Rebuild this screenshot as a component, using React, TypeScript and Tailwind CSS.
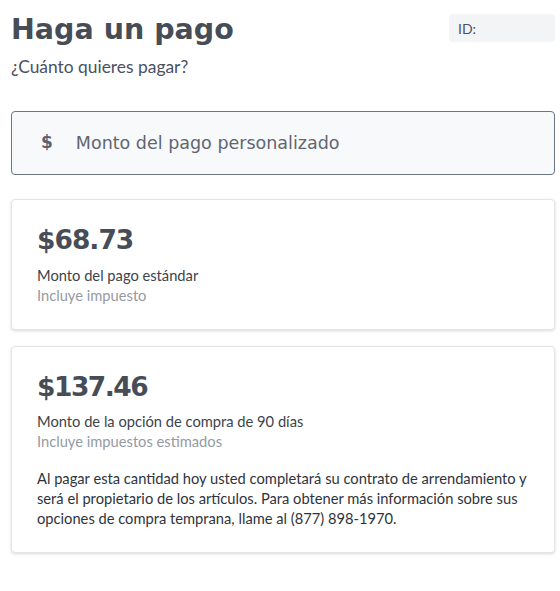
import React from 'react';

export default function App() {
    return (
        <div className="min-h-screen bg-white pl-[11px] pr-[5px] font-['Lato',sans-serif] text-[#3d434c]">
            {/* Header */}
            <div className="flex items-start justify-between pt-[14px]">
                <div>
                    <h1 className="text-[28.5px] leading-[32px] font-bold text-[#474d57] font-['DejaVu_Sans',sans-serif]">Haga un pago</h1>
                    <p className="mt-[11px] text-[17.4px] leading-[20px] text-[#4a5160]">¿Cuánto quieres pagar?</p>
                </div>
                <div className="w-[106px] h-[28px] rounded-[4px] bg-[#f3f4f6] px-[9px] flex items-center text-[14px] text-[#4a5160]">ID:</div>
            </div>

            {/* Custom amount input */}
            <div className="mt-[34px] h-[64px] flex items-center rounded-[4px] border border-[#6b7685] bg-[#f8f9fb] px-[29px]">
                <span className="text-[17px] font-bold text-[#5a6270] font-['DejaVu_Sans',sans-serif]">$</span>
                <span className="ml-[23px] text-[17.5px] text-[#5f6671] font-['DejaVu_Sans',sans-serif]">Monto del pago personalizado</span>
            </div>

            {/* Standard payment */}
            <div className="mt-[24px] rounded-[4px] border border-[#e3e5e8] bg-white shadow-[0_1px_3px_rgba(0,0,0,0.15)] px-[25px] pt-[22px] pb-[24px]">
                <div className="text-[26.5px] leading-[36px] font-bold tracking-[-1px] text-[#474d57] font-['DejaVu_Sans',sans-serif]">$68.73</div>
                <p className="mt-[7px] text-[14.7px] leading-[20px] text-[#3d434c]">Monto del pago estándar</p>
                <p className="text-[14.7px] leading-[20px] text-[#959aa3]">Incluye impuesto</p>
            </div>

            {/* 90-day option */}
            <div className="mt-[16px] rounded-[4px] border border-[#e3e5e8] bg-white shadow-[0_1px_3px_rgba(0,0,0,0.15)] px-[25px] pt-[22px] pb-[24px]">
                <div className="text-[26.5px] leading-[36px] font-bold tracking-[-1.5px] text-[#474d57] font-['DejaVu_Sans',sans-serif]">$137.46</div>
                <p className="mt-[6px] text-[14.7px] leading-[20px] text-[#3d434c]">Monto de la opción de compra de 90 días</p>
                <p className="text-[14.7px] leading-[20px] text-[#959aa3]">Incluye impuestos estimados</p>
                <p className="mt-[17px] text-[14.7px] leading-[20px] text-[#2f343b]">
                    Al pagar esta cantidad hoy usted completará su contrato de arrendamiento y será el propietario de los artículos. Para obtener más información sobre sus opciones de compra temprana, llame al (877) 898-1970.
                </p>
            </div>
        </div>
    );
}
